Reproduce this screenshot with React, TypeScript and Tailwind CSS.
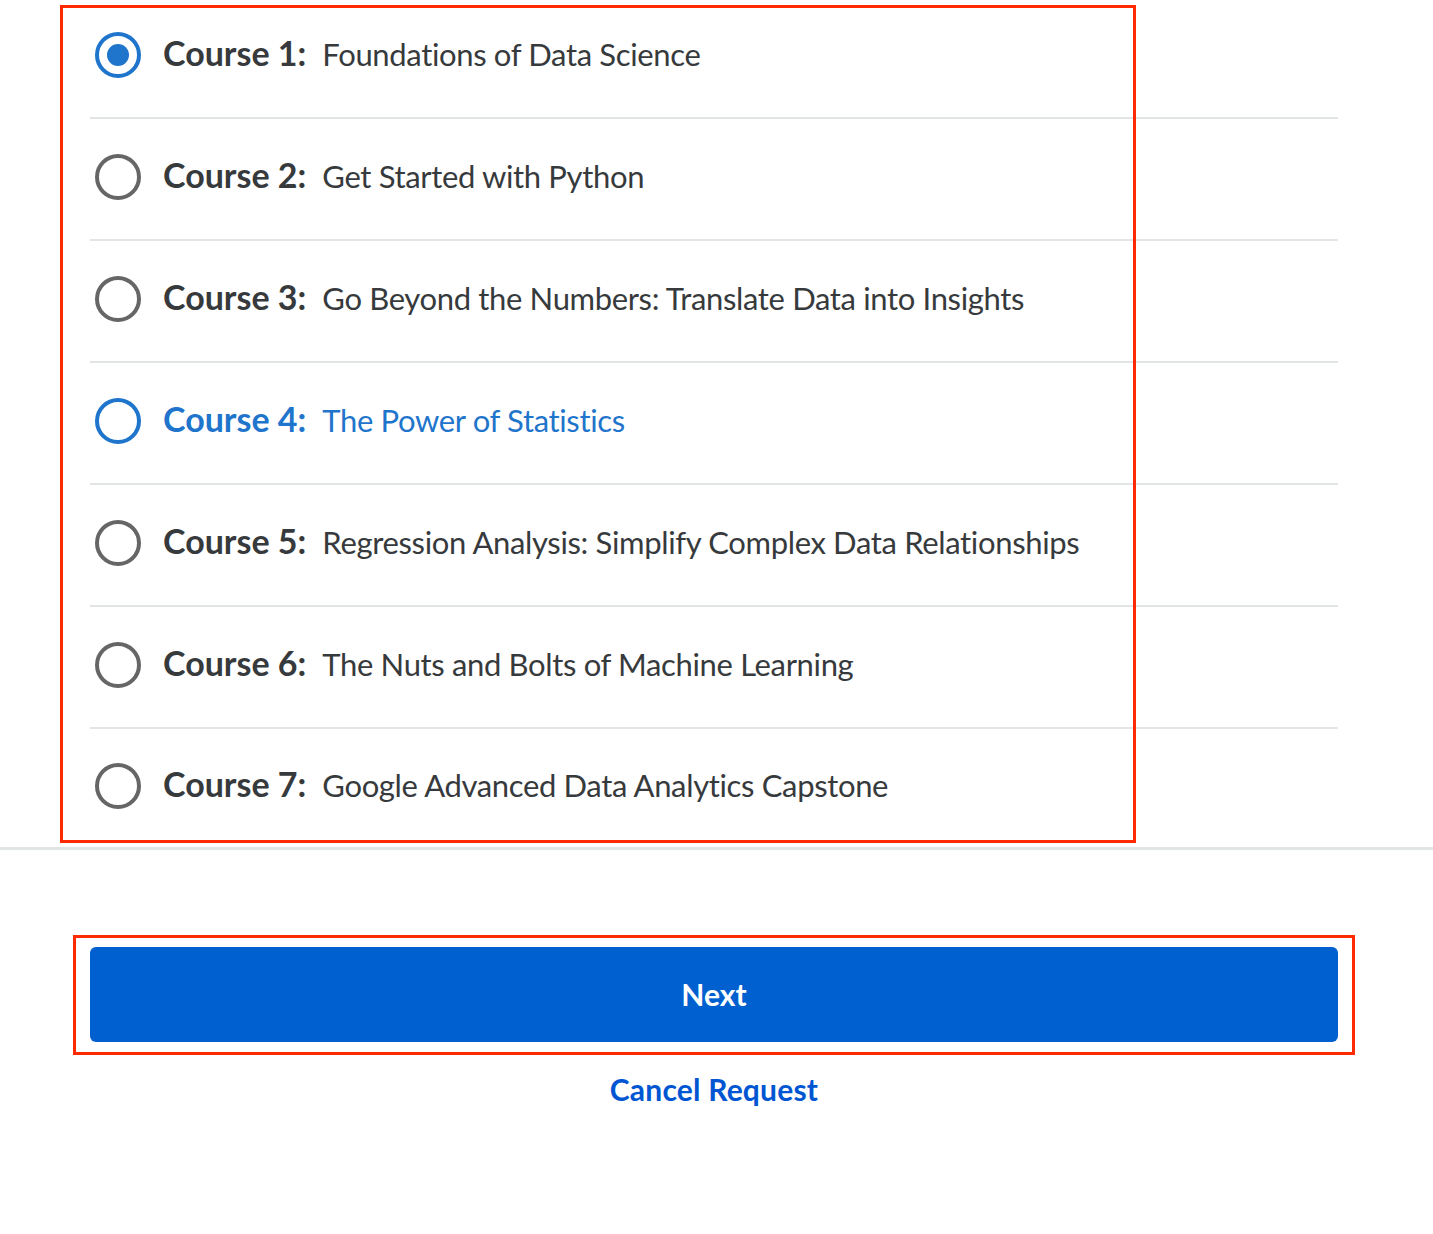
import React from "react";

const courses = [
  { n: 1, t: "Foundations of Data Science", state: "selected" },
  { n: 2, t: "Get Started with Python", state: "" },
  { n: 3, t: "Go Beyond the Numbers: Translate Data into Insights", state: "" },
  { n: 4, t: "The Power of Statistics", state: "focus" },
  { n: 5, t: "Regression Analysis: Simplify Complex Data Relationships", state: "" },
  { n: 6, t: "The Nuts and Bolts of Machine Learning", state: "" },
  { n: 7, t: "Google Advanced Data Analytics Capstone", state: "" },
];

function Radio({ state }: { state: string }) {
  if (state === "selected") {
    return (
      <span className="w-[46px] h-[46px] rounded-full border-[4px] border-[#1f75cb] flex items-center justify-center shrink-0">
        <span className="w-[22px] h-[22px] rounded-full bg-[#1f75cb]" />
      </span>
    );
  }
  if (state === "focus") {
    return <span className="w-[46px] h-[46px] rounded-full border-[4px] border-[#1f75cb] shrink-0" />;
  }
  return <span className="w-[46px] h-[46px] rounded-full border-[4px] border-[#666666] shrink-0" />;
}

export default function App() {
  return (
    <div className="relative w-[1433px] h-[1234px] bg-white overflow-hidden font-['Lato','Liberation_Sans',sans-serif]">
      <div className="border-b-[3px] border-[#e1e5e5] mt-[-3px]">
        <div className="pl-[90px] pr-[95px]">
          {courses.map((c, i) => (
            <div
              key={c.n}
              className={
                "flex items-center pl-[5px] pb-[5px] " +
                (i < courses.length - 1 ? "h-[122px] border-b-2 border-[#e1e5e5]" : "h-[118px]")
              }
            >
              <Radio state={c.state} />
              <span
                className={
                  "ml-[22px] mt-[-4px] flex items-baseline " +
                  (c.state === "focus" ? "text-[#1f75cb]" : "text-[#373a3c]")
                }
              >
                <span className="font-bold text-[34px]">Course {c.n}:</span>
                <span className="ml-[16px] text-[31px] tracking-[-0.35px]">{c.t}</span>
              </span>
            </div>
          ))}
        </div>
      </div>
      <div className="pl-[90px] pr-[95px] pt-[97px] flex flex-col items-center">
        <button className="w-full h-[95px] rounded-[6px] bg-[#0060cf] text-white font-bold text-[30px]">
          Next
        </button>
        <span className="mt-[27px] text-[#0056d2] font-bold text-[30px] leading-[40px] tracking-[0.2px]">Cancel Request</span>
      </div>
      <div className="absolute left-[60px] top-[5px] w-[1076px] h-[838px] border-[3px] border-[#ff2a00] pointer-events-none" />
      <div className="absolute left-[73px] top-[935px] w-[1282px] h-[120px] border-[3px] border-[#ff2a00] pointer-events-none" />
    </div>
  );
}
